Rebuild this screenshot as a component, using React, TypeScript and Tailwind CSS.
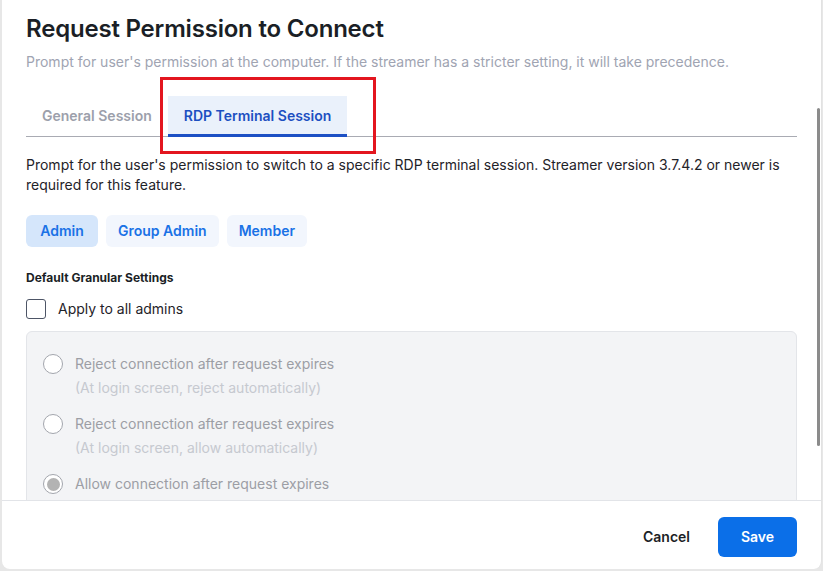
import React from 'react';

const roles = ['Admin', 'Group Admin', 'Member'];

const options = [
  { label: 'Reject connection after request expires', note: '(At login screen, reject automatically)', checked: false },
  { label: 'Reject connection after request expires', note: '(At login screen, allow automatically)', checked: false },
  { label: 'Allow connection after request expires', note: '', checked: true },
];

function Radio({ checked }: { checked: boolean }) {
  return (
    <span className="flex h-5 w-5 shrink-0 items-center justify-center rounded-full border-[1.5px] border-[#a3a6ad] bg-white">
      {checked && <span className="h-[13px] w-[13px] rounded-full bg-[#b3b3b3]" />}
    </span>
  );
}

export default function App() {
  return (
    <div
      className="relative h-[571px] w-[823px] overflow-hidden bg-[#e7e7e7] pl-[2px]"
      style={{ fontFamily: 'Inter, "Noto Sans", sans-serif' }}
    >
      {/* modal */}
      <div className="flex h-[569px] w-[820px] flex-col rounded-b-lg border-r border-[#e2e2e2] bg-white">
        {/* body */}
        <div className="relative flex-1 overflow-hidden pl-6 pr-6">
          <h1 className="pt-[13px] text-[24px] leading-8 font-semibold tracking-[-0.2px] text-[#1b1f26]">
            Request Permission to Connect
          </h1>
          <p className="mt-[7px] text-sm leading-5 text-[#a0a4b2]">
            Prompt for user's permission at the computer. If the streamer has a stricter setting, it will take precedence.
          </p>

          {/* tabs */}
          <div className="mt-6 flex w-[771px] border-b border-[#a9abb3]">
            <button className="h-10 px-4 text-sm font-semibold text-[#9ca0ab]">General Session</button>
            <button className="-mb-px h-[41px] border-b-[3px] border-[#1c50c4] bg-[#eaf1fb] px-4 pt-px text-sm font-semibold text-[#1c4fc1]">
              RDP Terminal Session
            </button>
          </div>

          <p className="mt-[18px] w-[771px] text-sm leading-5 text-[#1f2329]">
            Prompt for the user's permission to switch to a specific RDP terminal session. Streamer version 3.7.4.2 or newer is required for this feature.
          </p>

          {/* roles */}
          <div className="mt-5 flex gap-2">
            {roles.map((r, i) => (
              <button
                key={r}
                className={`h-8 min-w-[72px] rounded-md px-3 text-sm font-semibold text-[#1a72e6] ${
                  i === 0 ? 'bg-[#d5e6fb]' : 'bg-[#f2f6fd]'
                }`}
              >
                {r}
              </button>
            ))}
          </div>

          <div className="mt-[23px] text-xs leading-4 font-bold text-[#1b1f26]">Default Granular Settings</div>

          <label className="mt-3 flex items-center gap-3 pt-px">
            <span className="h-5 w-5 rounded-[3px] border-[1.5px] border-[#4d5566] bg-white" />
            <span className="text-sm leading-5 text-[#1f2329]">Apply to all admins</span>
          </label>

          <div className="mt-3 w-[771px] rounded-md border border-[#e3e5e9] bg-[#f3f4f6] px-4 pt-[20px] pb-8">
            <div className="flex flex-col gap-3">
              {options.map((o, i) => (
                <div key={i} className="flex gap-3">
                  <div className="flex h-6 items-center">
                    <Radio checked={o.checked} />
                  </div>
                  <div className="text-sm">
                    <div className="leading-6 text-[#9c9ea5]">{o.label}</div>
                    {o.note && <div className="leading-6 text-[#c6c9d0]">{o.note}</div>}
                  </div>
                </div>
              ))}
            </div>
          </div>

          {/* scrollbar thumb */}
          <div className="absolute top-[108px] right-[1px] h-[338px] w-[3px] rounded-full bg-[#8b8b8b]" />
        </div>

        {/* footer */}
        <div className="flex items-center justify-end gap-3 border-t border-[#e2e4e8] pt-4 pr-6 pb-3">
          <button className="h-10 px-4 text-sm font-semibold text-[#1b1f26]">Cancel</button>
          <button className="h-10 w-[79px] rounded-md bg-[#0b6fe8] text-sm font-semibold text-white">Save</button>
        </div>
      </div>

      {/* annotation box */}
      <div className="pointer-events-none absolute top-[77px] left-[160px] h-[77px] w-[216px] border-[3px] border-[#e3161f]" />
    </div>
  );
}
